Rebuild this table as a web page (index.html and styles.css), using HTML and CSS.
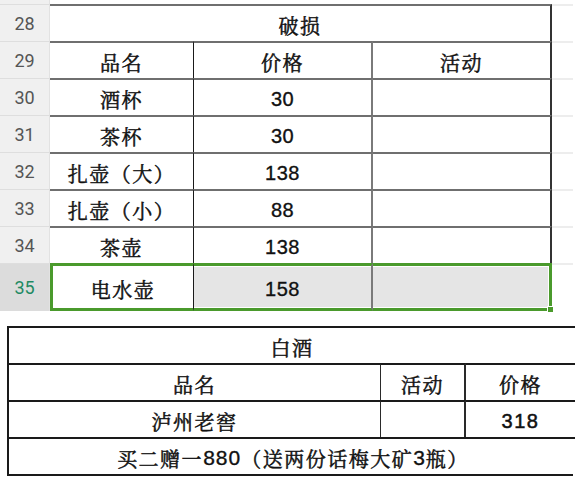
FILE: index.html
```html
<!DOCTYPE html>
<html lang="zh">
<head>
<meta charset="utf-8">
<link rel="stylesheet" href="styles.css">
</head>
<body>
<div class="sheet">
  <div class="rh strip"></div><div class="strip span3"></div><div class="strip"></div>

  <div class="rh">28</div><div class="c title span3">破损</div><div class="ext"></div>

  <div class="rh">29</div><div class="c c1">品名</div><div class="c c2">价格</div><div class="c c3">活动</div><div class="ext"></div>
  <div class="rh">30</div><div class="c c1">酒杯</div><div class="c c2 num">30</div><div class="c c3"></div><div class="ext"></div>
  <div class="rh">31</div><div class="c c1">茶杯</div><div class="c c2 num">30</div><div class="c c3"></div><div class="ext"></div>
  <div class="rh">32</div><div class="c c1">扎壶（大）</div><div class="c c2 num">138</div><div class="c c3"></div><div class="ext"></div>
  <div class="rh">33</div><div class="c c1">扎壶（小）</div><div class="c c2 num">88</div><div class="c c3"></div><div class="ext"></div>
  <div class="rh">34</div><div class="c c1">茶壶</div><div class="c c2 num">138</div><div class="c c3"></div><div class="ext"></div>
  <div class="rh rh-sel">35</div><div class="c c1 sel">电水壶</div><div class="c c2 num sel shade">158</div><div class="c c3 sel shade"><span class="handle"></span></div><div class="ext"></div>
</div>

<div class="liquor">
  <div class="b bt span-all">白酒</div>
  <div class="b b1">品名</div><div class="b b2">活动</div><div class="b b3">价格</div>
  <div class="b b1">泸州老窖</div><div class="b b2"></div><div class="b b3 num">318</div>
  <div class="b bl span-all">买二赠一<span class="numi">880</span>（送两份话梅大矿<span class="numi">3</span>瓶）</div>
</div>
</body>
</html>
```
FILE: styles.css
```css
* { box-sizing: border-box; }
html, body { margin: 0; padding: 0; background: #fff; }
body {
  width: 583px;
  height: 481px;
  overflow: hidden;
  font-family: "Noto Serif CJK SC", "Noto Sans CJK SC", sans-serif;
  color: #111;
}

.sheet {
  display: grid;
  grid-template-columns: 50px 144px 179px 179px 21px;
  grid-template-rows: 4px repeat(7, 37px) 48px;
}

.span3 { grid-column: span 3; }

.strip { background: #fff; }
.rh.strip { background: #f0f0f0; border-top: none; }

.rh {
  background: #f0f0f0;
  border-top: 1px solid #dedede;
  border-right: 1px solid #e2e2e2;
  font-family: Roboto, "Liberation Sans", sans-serif;
  font-size: 18px;
  color: #555;
  display: flex;
  align-items: center;
  justify-content: center;
}
.rh-sel {
  background: #dcdcdc;
  color: #1f8a63;
}

.c {
  border-top: 2px solid #6f6f6f;
  display: flex;
  align-items: center;
  justify-content: center;
  padding-top: 4px;
  font-size: 20px;
  font-weight: 400;
  -webkit-text-stroke: 0.5px #111;
  letter-spacing: 1.5px;
}
.title { border-right: 2px solid #333; }
.c1 { border-right: 1px solid #1a1a1a; }
.c2 { border-right: 2px solid #7a7a7a; }
.c3 { border-right: 2px solid #333; }

.num, .numi {
  font-family: "Liberation Sans", Arial, sans-serif;
  font-weight: 400;
  -webkit-text-stroke: 0.35px #111;
  letter-spacing: 0.5px;
}

.ext { border-top: 2px solid #ededed; }

.sel {
  border-top: 3px solid #4a9a2c;
  border-bottom: 3px solid #4a9a2c;
}
.c1.sel { border-left: 3px solid #4a9a2c; }
.c3.sel { border-right: 3px solid #4a9a2c; position: relative; }
.shade {
  background: #e5e5e5;
  box-shadow: inset 0 1px 0 #fff, inset 0 -1px 0 #fff;
}
.c3.shade { box-shadow: inset 0 1px 0 #fff, inset 0 -1px 0 #fff, inset -1px 0 0 #fff; }

.handle {
  position: absolute;
  right: -5px;
  bottom: -5px;
  width: 7px;
  height: 7px;
  background: #4a9a2c;
  border: 1px solid #fff;
}

.liquor {
  margin: 15px 0 0 7px;
  width: 566px;
  display: grid;
  grid-template-columns: 372px 85px 109px;
  grid-template-rows: repeat(4, 37px);
  border-left: 2px solid #1a1a1a;
  border-bottom: 2px solid #1a1a1a;
}
.span-all { grid-column: 1 / -1; }
.b {
  border-top: 2px solid #1a1a1a;
  display: flex;
  align-items: center;
  justify-content: center;
  padding-top: 3px;
  font-size: 20px;
  font-weight: 400;
  -webkit-text-stroke: 0.5px #111;
  letter-spacing: 1.5px;
}
.b1 { border-right: 1px solid #2a2a2a; }
.b2 { border-right: 2px solid #2a2a2a; }
.bl { padding-left: 2px; }
.numi { font-size: 21px; letter-spacing: 1px; }
```
